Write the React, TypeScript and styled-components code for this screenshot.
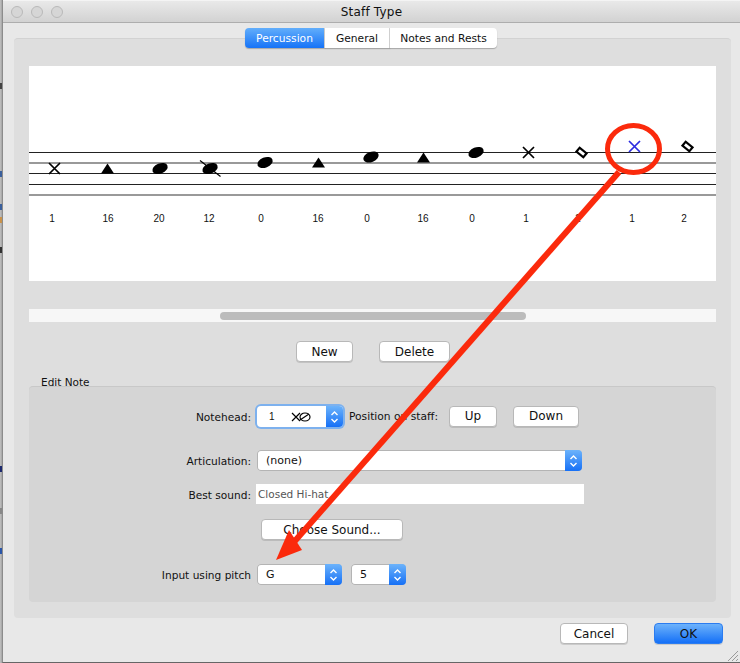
import React from "react";
import styled, { createGlobalStyle } from "styled-components";

const GlobalStyle = createGlobalStyle`
  html, body {
    margin: 0;
    padding: 0;
    background: #b4b4b4;
    overflow: hidden;
  }
`;

const Desktop = styled.div`
  position: relative;
  width: 740px;
  height: 663px;
  padding-left: 2px;
  box-sizing: border-box;
  background: linear-gradient(90deg, #c2c2c2, #a4a4a4 2px);
  font-family: "DejaVu Sans", "Liberation Sans", sans-serif;
  font-size: 11px;
  color: #111;
`;

const BehindMark = styled.span<{ $y: number; $color: string }>`
  position: absolute;
  left: 0;
  top: ${p => p.$y}px;
  width: 2px;
  height: 6px;
  background: ${p => p.$color};
`;

const Window = styled.div`
  width: 738px;
  height: 663px;
  box-sizing: border-box;
  display: flex;
  flex-direction: column;
  background: #e8e8e8;
  border-left: 1px solid #8c8c8c;
  border-bottom: 1px solid #666;
`;

const TitleBar = styled.div`
  position: relative;
  height: 23px;
  flex: none;
  box-sizing: border-box;
  display: flex;
  align-items: center;
  justify-content: center;
  border-top: 1px solid #f4f4f4;
  border-bottom: 1px solid #adadad;
  background: linear-gradient(#e9e9e9, #d2d2d2);
  font-size: 12px;
  letter-spacing: 0.2px;
`;

const Lights = styled.div`
  position: absolute;
  left: 8px;
  top: 5px;
  display: flex;
  gap: 8px;
`;

const Light = styled.span`
  width: 10px;
  height: 10px;
  border-radius: 50%;
  background: #d6d6d6;
  border: 1px solid #b9b9b9;
`;

const TabWrap = styled.div`
  position: relative;
  margin: 5px 9px 0 11px;
  flex: none;
`;

const Tabs = styled.div`
  position: relative;
  z-index: 1;
  display: flex;
  justify-content: center;
  height: 20px;
  margin-bottom: -10px;
  padding-right: 3px;
`;

const Tab = styled.div<{ $active?: boolean; $width: number }>`
  width: ${p => p.$width}px;
  box-sizing: border-box;
  padding-top: 1px;
  display: flex;
  align-items: center;
  justify-content: center;
  font-size: 10.7px;
  color: ${p => (p.$active ? "#fff" : "#111")};
  background: ${p => (p.$active ? "linear-gradient(#62aefb, #1673f7)" : "#fff")};
  border-right: 1px solid #d4d4d4;
  box-shadow: 0 1px 1px rgba(0, 0, 0, 0.25);
  &:first-child {
    border-radius: 4px 0 0 4px;
  }
  &:last-child {
    border-radius: 0 4px 4px 0;
    border-right: none;
  }
`;

const TabPanel = styled.div`
  height: 580px;
  box-sizing: border-box;
  padding: 27px 15px 0;
  background: #dedede;
  border-top: 1px solid #d2d2d2;
  border-radius: 4px;
`;

const ScoreCanvas = styled.svg`
  display: block;
  width: 687px;
  height: 215px;
  background: #fff;
`;

const ScrollTrack = styled.div`
  height: 13px;
  margin-top: 28px;
  padding: 3px 190px 2px 191px;
  box-sizing: border-box;
  background: #f7f7f7;
`;

const ScrollThumb = styled.div`
  height: 8px;
  border-radius: 4px;
  background: #bcbcbc;
`;

const MainActions = styled.div`
  display: flex;
  gap: 26px;
  margin: 19px 0 0 267px;
`;

const Button = styled.button<{ $width: number; $primary?: boolean }>`
  width: ${p => p.$width}px;
  height: 21px;
  flex: none;
  padding: 0;
  box-sizing: border-box;
  font-family: inherit;
  font-size: 12px;
  color: #111;
  border-radius: 4px;
  border: 1px solid ${p => (p.$primary ? "#2b7cf0" : "#b8b8b8")};
  background: ${p => (p.$primary ? "linear-gradient(#6db2fb, #1470f7)" : "#fff")};
  box-shadow: 0 1px 0 rgba(0, 0, 0, 0.12);
`;

const StaffButton = styled(Button)<{ $gap: number }>`
  margin: -1px 0 0 ${p => p.$gap}px;
`;

const GroupTitle = styled.div`
  height: 13px;
  margin: 14px 0 -3px 12px;
  font-size: 10.5px;
  line-height: 13px;
  position: relative;
  z-index: 1;
`;

const GroupBox = styled.div`
  height: 216px;
  box-sizing: border-box;
  padding-top: 19px;
  background: #d5d5d5;
  border-top: 1px solid #c8c8c8;
  border-radius: 4px;
`;

const Row = styled.div<{ $top: number }>`
  display: flex;
  align-items: center;
  margin-top: ${p => p.$top}px;
  height: 21px;
`;

const Label = styled.label`
  width: 222px;
  flex: none;
  margin-right: 6px;
  text-align: right;
  font-size: 10.6px;
`;

const SideLabel = styled.span`
  margin: 0 11px 0 6px;
  font-size: 10.7px;
`;

const SelectBox = styled.div<{ $width: number; $focus?: boolean; $gap?: number }>`
  width: ${p => p.$width}px;
  height: 21px;
  flex: none;
  box-sizing: border-box;
  display: flex;
  align-items: center;
  margin-left: ${p => p.$gap ?? 0}px;
  background: #fff;
  border-radius: 4px;
  overflow: hidden;
  box-shadow: ${p => (p.$focus ? "0 0 0 2px #7db1ee" : "inset 0 0 0 1px #b4b4b4")};
  font-size: 11px;
`;

const SelectText = styled.span`
  flex: 1;
  display: flex;
  align-items: center;
  gap: 16px;
  padding-left: 9px;
`;

const NoteNumber = styled.span`
  margin-left: 3px;
  font-family: "Liberation Sans", sans-serif;
  font-size: 10px;
`;

const Stepper = styled.span`
  width: 17px;
  height: 100%;
  flex: none;
  display: flex;
  align-items: center;
  justify-content: center;
  background: linear-gradient(#6cb3fb, #1670f6);
`;

const SoundField = styled.div`
  width: 328px;
  height: 20px;
  align-self: flex-start;
  margin-left: -1px;
  padding-left: 2px;
  box-sizing: border-box;
  line-height: 21px;
  background: #fff;
  color: #555;
  font-size: 10.5px;
`;

const ChooseRow = styled.div`
  margin: 14px 0 0 232px;
`;

const Footer = styled.div`
  display: flex;
  justify-content: flex-end;
  gap: 26px;
  padding: 5px 17px 0 0;
`;

const Grip = styled.svg`
  position: absolute;
  right: 1px;
  bottom: 1px;
`;

const Overlay = styled.svg`
  position: absolute;
  left: 0;
  top: 0;
  pointer-events: none;
`;

const Chevrons = () => (
  <svg width="9" height="14" viewBox="0 0 9 14" fill="none" stroke="#fff" strokeWidth="1.4">
    <path d="M1.5 5 4.5 2 7.5 5" />
    <path d="M1.5 9 4.5 12 7.5 9" />
  </svg>
);

const Select = ({ width, focus, gap, children }: { width: number; focus?: boolean; gap?: number; children: React.ReactNode }) => (
  <SelectBox $width={width} $focus={focus} $gap={gap}>
    <SelectText>{children}</SelectText>
    <Stepper>
      <Chevrons />
    </Stepper>
  </SelectBox>
);

const Cross = ({ x, y, color = "#000" }: { x: number; y: number; color?: string }) => (
  <path d={`M${x - 5.5} ${y - 5.5}L${x + 5.5} ${y + 5.5}M${x + 5.5} ${y - 5.5}L${x - 5.5} ${y + 5.5}`} stroke={color} strokeWidth="1.7" fill="none" />
);

const Triangle = ({ x, y }: { x: number; y: number }) => (
  <polygon points={`${x},${y - 5} ${x + 6.5},${y + 5} ${x - 6.5},${y + 5}`} fill="#000" />
);

const Head = ({ x, y }: { x: number; y: number }) => (
  <ellipse cx={x} cy={y} rx="8" ry="5" transform={`rotate(-22 ${x} ${y})`} fill="#000" />
);

const Diamond = ({ x, y }: { x: number; y: number }) => (
  <rect x={x - 4.5} y={y - 2.5} width="9" height="5" transform={`rotate(40 ${x} ${y})`} fill="#fff" stroke="#000" strokeWidth="2.2" />
);

const staffLines = [
  { y: 152.5, w: 1, c: "#222" },
  { y: 163, w: 1.6, c: "#777" },
  { y: 173.5, w: 1, c: "#222" },
  { y: 184.5, w: 1, c: "#222" },
  { y: 195, w: 1.6, c: "#777" }
];

const numbers = [
  [52, "1"], [108, "16"], [159, "20"], [209, "12"], [261, "0"], [318, "16"], [367, "0"],
  [423, "16"], [472, "0"], [526, "1"], [578, "2"], [632, "1"], [684, "2"]
] as const;

// bits of the window behind that stick out on the left edge
const behindMarks = [
  [83, "#444"], [171, "#3a5f9c"], [204, "#3a5f9c"], [217, "#c9924a"], [247, "#333"],
  [466, "#1d2a6e"], [508, "#888"], [548, "#2a55a8"]
] as const;

const Score = () => (
  <ScoreCanvas viewBox="29 66 687 215">
    {staffLines.map(l => (
      <line key={l.y} x1="29" x2="716" y1={l.y} y2={l.y} stroke={l.c} strokeWidth={l.w} />
    ))}
    <Cross x={54.5} y={168.5} />
    <Triangle x={107.5} y={168.5} />
    <Head x={160} y={168.5} />
    <Head x={210} y={168.5} />
    <line x1="200" y1="160.5" x2="220.5" y2="176.5" stroke="#000" strokeWidth="1.2" />
    <Head x={265} y={162.5} />
    <Triangle x={318.5} y={162.5} />
    <Head x={371} y={157} />
    <Triangle x={423.5} y={157.5} />
    <Head x={476} y={152.5} />
    <Cross x={528.5} y={152.5} />
    <Diamond x={581.5} y={152.5} />
    <Cross x={634.5} y={146.5} color="#2a2ae0" />
    <Diamond x={687.5} y={146.5} />
    {numbers.map(([x, n]) => (
      <text key={x} x={x} y="222" textAnchor="middle" fontFamily="Liberation Sans, sans-serif" fontSize="10" fill="#111">
        {n}
      </text>
    ))}
  </ScoreCanvas>
);

const NoteheadGlyph = () => (
  <svg width="20" height="10" viewBox="0 0 20 10" fill="none" stroke="#000" strokeWidth="1.2">
    <path d="M1 1 9 9M9 1 1 9" />
    <ellipse cx="14" cy="5" rx="5" ry="4" />
    <path d="M9 8 18 2" />
  </svg>
);

export default function App() {
  return (
    <>
      <GlobalStyle />
      <Desktop>
        {behindMarks.map(([y, c]) => (
          <BehindMark key={y} $y={y} $color={c} />
        ))}
        <Window>
          <TitleBar>
            <Lights>
              <Light />
              <Light />
              <Light />
            </Lights>
            Staff Type
          </TitleBar>
          <TabWrap>
            <Tabs>
              <Tab $active $width={80}>Percussion</Tab>
              <Tab $width={65}>General</Tab>
              <Tab $width={107}>Notes and Rests</Tab>
            </Tabs>
            <TabPanel>
              <Score />
              <ScrollTrack>
                <ScrollThumb />
              </ScrollTrack>
              <MainActions>
                <Button $width={57}>New</Button>
                <Button $width={71}>Delete</Button>
              </MainActions>
              <GroupTitle>Edit Note</GroupTitle>
              <GroupBox>
                <Row $top={0}>
                  <Label>Notehead:</Label>
                  <Select width={86} focus>
                    <NoteNumber>1</NoteNumber>
                    <NoteheadGlyph />
                  </Select>
                  <SideLabel>Position on staff:</SideLabel>
                  <StaffButton $width={48} $gap={0}>Up</StaffButton>
                  <StaffButton $width={66} $gap={16}>Down</StaffButton>
                </Row>
                <Row $top={23}>
                  <Label>Articulation:</Label>
                  <Select width={325}>(none)</Select>
                </Row>
                <Row $top={13}>
                  <Label>Best sound:</Label>
                  <SoundField>Closed Hi-hat</SoundField>
                </Row>
                <ChooseRow>
                  <Button $width={142}>Choose Sound...</Button>
                </ChooseRow>
                <Row $top={24}>
                  <Label>Input using pitch</Label>
                  <Select width={85}>G</Select>
                  <Select width={55} gap={9}>5</Select>
                </Row>
              </GroupBox>
            </TabPanel>
          </TabWrap>
          <Footer>
            <Button $width={68}>Cancel</Button>
            <Button $width={69} $primary>OK</Button>
          </Footer>
        </Window>
        <Grip width="12" height="12" viewBox="0 0 12 12" stroke="#9a9a9a" strokeWidth="1">
          <path d="M1 11 11 1M5 11 11 5M9 11 11 9" />
        </Grip>
        <Overlay width="740" height="663" viewBox="0 0 740 663" fill="none">
          <ellipse cx="633.5" cy="149" rx="26" ry="23.5" stroke="#fb2a0c" strokeWidth="5" />
          <line x1="619" y1="172" x2="294" y2="542" stroke="#fb2a0c" strokeWidth="6" />
          <polygon points="276,560 289,530 302,550" fill="#fb2a0c" />
        </Overlay>
      </Desktop>
    </>
  );
}
